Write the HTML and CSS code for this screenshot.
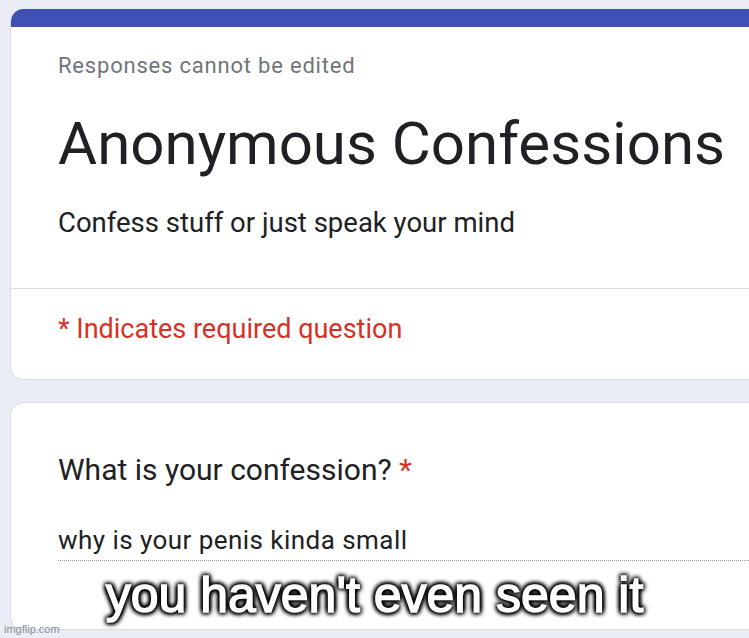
FILE: index.html
```html
<!DOCTYPE html>
<html>
<head>
<meta charset="utf-8">
<link rel="stylesheet" href="styles.css">
</head>
<body>
<div class="page">
  <section class="card header-card">
    <div class="band"></div>
    <div class="head-body">
      <div class="note">Responses cannot be edited</div>
      <h1 class="title">Anonymous Confessions</h1>
      <div class="desc">Confess stuff or just speak your mind</div>
    </div>
    <div class="required">* Indicates required question</div>
  </section>
  <section class="card question-card">
    <div class="question">What is your confession? <span class="star">*</span></div>
    <div class="answer">why is your penis kinda small</div>
  </section>
</div>
<div class="caption">you haven't even seen it</div>
<div class="watermark">imgflip.com</div>
</body>
</html>
```
FILE: styles.css
```css
html, body {
  margin: 0;
  padding: 0;
}
body {
  width: 749px;
  height: 638px;
  overflow: hidden;
  background: #ebedf6;
  position: relative;
  font-family: Roboto, "Noto Sans", sans-serif;
}
.page {
  padding: 9px 0 0 10px;
  display: flex;
  flex-direction: column;
  gap: 22px;
}
.card {
  width: 800px;
  background: #fff;
  border: 1px solid #dadce0;
  border-radius: 13px;
  box-sizing: border-box;
}
.header-card {
  height: 371px;
  border-top: none;
  overflow: hidden;
}
.band {
  height: 18px;
  background: #3f51b5;
}
.head-body {
  padding: 25px 0 0 47px;
  height: 262px;
  box-sizing: border-box;
  border-bottom: 1px solid #dadce0;
}
.note {
  font-size: 22px;
  line-height: 28px;
  letter-spacing: 0.8px;
  color: #70757a;
}
.title {
  margin: 28px 0 0 0;
  font-weight: 400;
  font-size: 60px;
  line-height: 72px;
  color: #202124;
}
.desc {
  margin-top: 26px;
  font-size: 27.5px;
  line-height: 34px;
  color: #202124;
}
.required {
  padding: 23px 0 0 47px;
  font-size: 27px;
  line-height: 34px;
  color: #d93025;
}
.question-card {
  height: 228px;
  padding: 49px 0 0 47px;
}
.question {
  font-size: 30px;
  line-height: 36px;
  color: #202124;
}
.star {
  color: #d93025;
}
.answer {
  margin-top: 35px;
  font-size: 26px;
  line-height: 34px;
  letter-spacing: 0.45px;
  color: #202124;
  padding-bottom: 3px;
  border-bottom: 1px dotted #9aa0a6;
}
.caption {
  position: absolute;
  left: 0;
  width: 749px;
  top: 567px;
  text-align: center;
  font-family: "Liberation Sans", Arial, sans-serif;
  font-size: 50px;
  line-height: 56px;
  color: #fff;
  -webkit-text-stroke: 1.5px #fff;
  text-shadow: 0 0 2px #000, 0 0 3px #000, 0 0 4px #000, 0 0 6px #000, 2px 2px 4px #000, -2px -2px 4px #000, 2px -2px 4px #000, -2px 2px 4px #000;
}
.watermark {
  position: absolute;
  left: 4px;
  top: 623px;
  font-family: "Liberation Sans", Arial, sans-serif;
  font-size: 11px;
  line-height: 13px;
  color: #8a8d93;
}
```
